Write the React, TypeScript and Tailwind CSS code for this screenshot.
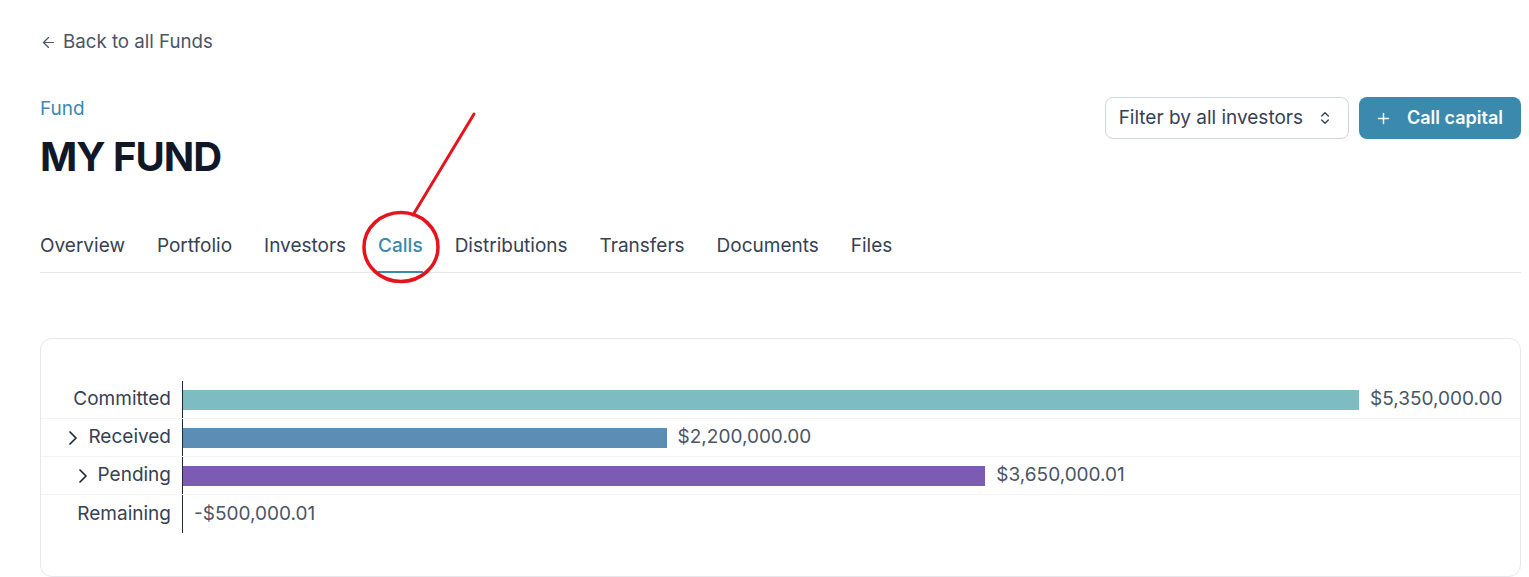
import { ArrowLeft, ChevronRight, ChevronsUpDown, Plus } from "lucide-react";

const tabs = [
  "Overview",
  "Portfolio",
  "Investors",
  "Calls",
  "Distributions",
  "Transfers",
  "Documents",
  "Files",
];

const rows = [
  { label: "Committed", value: 5350000, text: "$5,350,000.00", color: "bg-[#7dbdc1]", expandable: false },
  { label: "Received", value: 2200000, text: "$2,200,000.00", color: "bg-[#5b8db5]", expandable: true },
  { label: "Pending", value: 3650000.01, text: "$3,650,000.01", color: "bg-[#7b5cb2]", expandable: true },
  { label: "Remaining", value: 0, text: "-$500,000.01", color: "bg-transparent", expandable: false },
];

const MAX_BAR = 1176;

export default function App() {
  const max = rows[0].value;

  return (
    <div
      className="relative min-h-screen bg-white pl-10 pr-2 pt-7 text-[19px] text-gray-700"
      style={{ fontFamily: "Inter, 'Noto Sans', sans-serif" }}
    >
      {/* Back link */}
      <a className="flex items-center gap-1.5 text-[18.7px] text-gray-600 leading-7">
        <ArrowLeft size={17} strokeWidth={1.75} />
        Back to all Funds
      </a>

      {/* Header */}
      <div className="mt-[39px] flex items-start justify-between">
        <div>
          <div className="leading-7 text-[#3b89ad]">Fund</div>
          <h1 className="mt-[10px] text-[40px] font-bold leading-[48px] tracking-tight text-gray-900">MY FUND</h1>
        </div>
        <div className="mt-0.5 flex items-center gap-2.5">
          <button className="flex items-center gap-[14px] rounded-lg border border-gray-300 bg-white py-1.5 pl-[13px] pr-[15px] leading-7 text-gray-700">
            Filter by all investors
            <ChevronsUpDown size={16} strokeWidth={2} className="text-gray-700" />
          </button>
          <button className="flex items-center gap-[15px] rounded-lg bg-[#3b89ad] py-[7px] pl-4 pr-[18px] text-lg font-semibold leading-7 text-white">
            <Plus size={17} strokeWidth={2} />
            Call capital
          </button>
        </div>
      </div>

      {/* Tabs */}
      <nav className="mt-[51px] flex gap-8 border-b border-gray-200">
        {tabs.map((tab) => (
          <div
            key={tab}
            className={
              tab === "Calls"
                ? "-mb-px border-b-2 border-[#3b89ad] pb-[11px] font-medium leading-7 text-[#3b89ad]"
                : "pb-3 leading-7 text-gray-700"
            }
          >
            {tab}
          </div>
        ))}
      </nav>

      {/* Chart card */}
      <div className="mt-[65px] rounded-xl border border-gray-200 pb-[43px] pt-[42px]">
        {rows.map((row, i) => (
          <div
            key={row.label}
            className={`flex h-[38px] items-stretch ${i < rows.length - 1 ? "border-b border-gray-100" : ""}`}
          >
            <div className="flex w-[141px] items-center justify-end gap-[3px] pr-[11px] text-gray-700">
              {row.expandable && <ChevronRight size={24} strokeWidth={1.75} className="text-gray-800" />}
              {row.label}
            </div>
            <div className="flex flex-1 items-center border-l border-gray-800">
              {row.value > 0 && (
                <div
                  className={`h-5 ${row.color}`}
                  style={{ width: `${(row.value / max) * MAX_BAR}px` }}
                />
              )}
              <span className="ml-[11px] text-gray-600">{row.text}</span>
            </div>
          </div>
        ))}
      </div>

      {/* Annotation */}
      <svg
        className="pointer-events-none absolute left-0 top-0"
        width="1529"
        height="577"
      >
        <line x1="474" y1="114" x2="413" y2="215" stroke="#e5131b" strokeWidth="3" strokeLinecap="round" />
        <ellipse cx="401" cy="247" rx="37" ry="34.5" fill="none" stroke="#e5131b" strokeWidth="3.5" />
      </svg>
    </div>
  );
}
